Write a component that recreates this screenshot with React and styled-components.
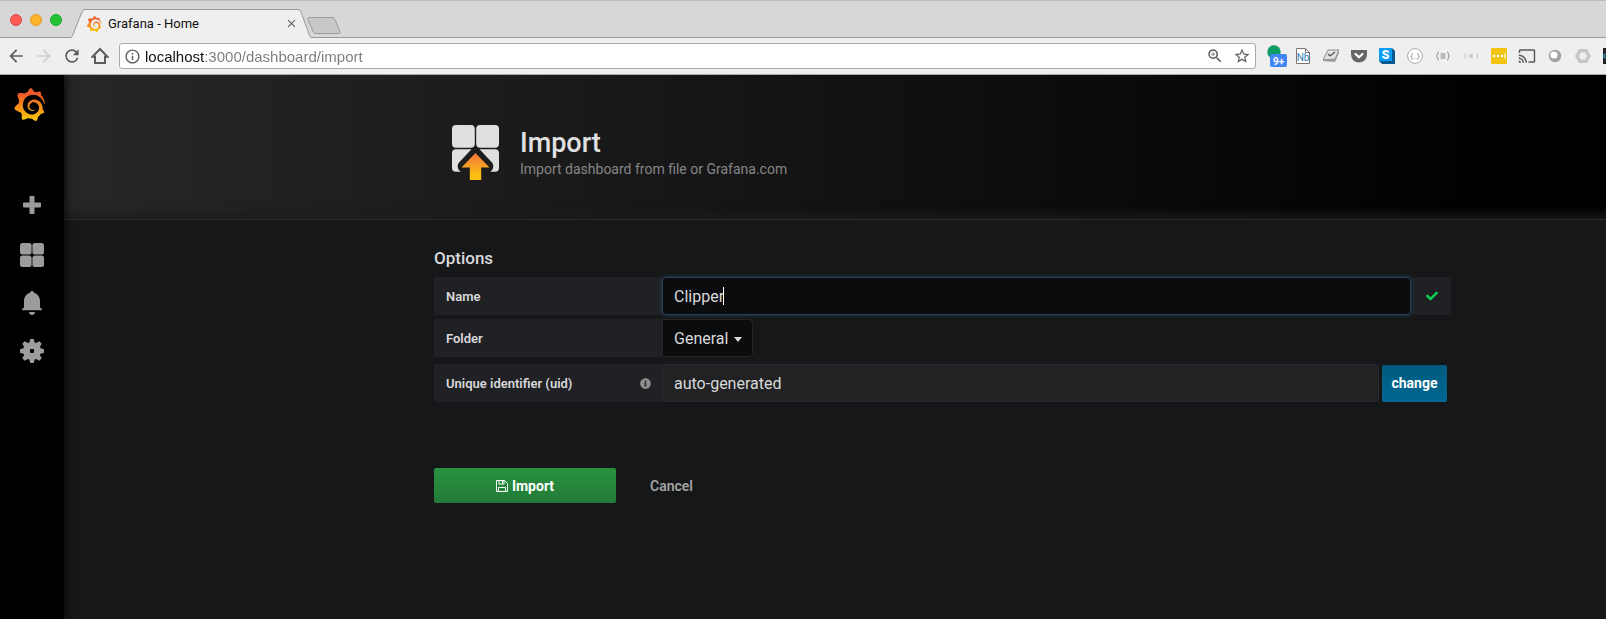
import React, { useState } from 'react';
import styled, { createGlobalStyle } from 'styled-components';
import { SiGrafana } from 'react-icons/si';
import { FaCheck, FaInfoCircle } from 'react-icons/fa';
import { MdArrowBack, MdArrowForward, MdRefresh, MdInfoOutline, MdZoomIn, MdStarBorder, MdCast, MdClose } from 'react-icons/md';

const Global = createGlobalStyle`
  * { box-sizing: border-box; }
  body { margin: 0; background: #161719; font-family: Roboto, "Liberation Sans", sans-serif; overflow: hidden; }
  button, input, select { font: inherit; margin: 0; border: 0; padding: 0; border-radius: 0; }
  button { cursor: pointer; }
  svg { display: block; flex: none; }
  h1, h2, p { margin: 0; }
`;

/* ---------- browser window ---------- */
const Window = styled.div`
  display: flex;
  flex-direction: column;
  min-height: 100vh;
`;
const TabStrip = styled.div`
  display: flex;
  align-items: flex-end;
  height: 38px;
  background: #d7d7d7;
  border-top: 1px solid #bdbdbd;
  box-shadow: inset 0 -1px #989898;
`;
const Lights = styled.div`
  display: flex;
  gap: 8px;
  padding: 0 8px 12px 10px;
`;
const Light = styled.button`
  width: 12px;
  height: 12px;
  border-radius: 50%;
  background: ${(p) => p.$color};
  border: 1px solid ${(p) => p.$edge};
`;
const Tab = styled.div`
  position: relative;
  display: flex;
  align-items: center;
  width: 242px;
  height: 29px;
  padding: 0 14px 0 16px;
`;
const TabShape = styled.svg`
  position: absolute;
  inset: 0;
  width: 100%;
  height: 100%;
`;
const TabTitle = styled.span`
  position: relative;
  flex: 1;
  margin-left: 6px;
  font-size: 13px;
  line-height: 16px;
  color: #111;
`;
const IconButton = styled.button`
  position: relative;
  display: flex;
  flex: none;
  align-items: center;
  justify-content: center;
  width: ${(p) => p.$w || 28}px;
  height: 24px;
  background: none;
  color: ${(p) => p.$color || '#5a5c60'};
`;
const NewTab = styled.button`
  background: none;
  padding-bottom: 4px;
  margin-left: -5px;
`;
const Toolbar = styled.div`
  display: flex;
  align-items: center;
  height: 37px;
  background: #efefef;
  border-bottom: 1px solid #a9a9a9;
  padding-left: 2px;
  overflow: hidden;
`;
const AddressBar = styled.div`
  display: flex;
  align-items: center;
  flex: 1;
  height: 26px;
  margin-left: 5px;
  padding: 0 0 0 4px;
  background: #fff;
  border: 1px solid #a9a9a9;
  border-radius: 3px;
  color: #5a5c60;
`;
const Url = styled.input`
  flex: 1;
  min-width: 0;
  height: 22px;
  margin-left: 4px;
  font-family: "Liberation Sans", Arial, sans-serif;
  font-size: 15px;
  color: transparent;
  background: linear-gradient(90deg, #111 60px, #7b7b7b 60px);
  background-clip: text;
  -webkit-background-clip: text;
  outline: 0;
`;
const Extensions = styled.div`
  display: flex;
  align-items: center;
  width: 350px;
  padding-left: 5px;
`;

/* ---------- Grafana ---------- */
const AppShell = styled.div`
  display: flex;
  flex: 1;
  overflow: hidden;
`;
const Sidebar = styled.nav`
  position: relative;
  z-index: 1;
  display: flex;
  flex-direction: column;
  align-items: center;
  width: 64px;
  background: #000;
  box-shadow: 0 0 10px #000;
`;
const SideLink = styled.a`
  display: flex;
  align-items: center;
  justify-content: center;
  width: 64px;
  height: 48px;
  margin-bottom: ${(p) => p.$after || 0}px;
  color: #9c9c9c;
`;
const LogoLink = styled(SideLink)`
  height: 58px;
  padding-right: 6px;
`;
const GrafanaMark = styled(SiGrafana)`
  position: relative;
  path { fill: url(#flame); }
`;
const Main = styled.main`
  flex: 1;
  min-width: 0;
  background: #161719;
`;
const PageHeader = styled.header`
  display: flex;
  align-items: flex-start;
  height: 145px;
  padding: 50px 155px 0 388px;
  background: linear-gradient(90deg, #272729, #000 94%);
  box-shadow: inset 0 -14px 12px -10px #1c1c1d;
  border-bottom: 1px solid #2b2b2d;
`;
const Titles = styled.div`
  margin-left: 21px;
`;
const Title = styled.h1`
  font-size: 27px;
  line-height: 36px;
  font-weight: 500;
  color: #e0e0e0;
`;
const Subtitle = styled.p`
  font-size: 14px;
  line-height: 16px;
  color: #868686;
`;
const Form = styled.form`
  padding: 27px 155px 0 370px;
`;
const Heading = styled.h2`
  font-size: 17px;
  line-height: 22px;
  font-weight: 500;
  color: #d8d9da;
  margin-bottom: 8px;
`;
const Row = styled.div`
  display: flex;
  align-items: center;
  height: 38px;
  margin-bottom: ${(p) => p.$after}px;
  padding-right: ${(p) => p.$inset || 0}px;
`;
const Label = styled.label`
  display: flex;
  align-items: center;
  justify-content: space-between;
  width: 228px;
  height: 38px;
  padding: 0 11px 0 12px;
  border-radius: 2px;
  background: #202124;
  color: #d8d9da;
  font-size: 13px;
  font-weight: 600;
`;
const Field = styled.div`
  position: relative;
  display: flex;
  flex: ${(p) => (p.$fit ? 'none' : 1)};
`;
const TextBox = styled.input`
  flex: 1;
  min-width: 0;
  height: 38px;
  padding: 0 11px;
  font-size: 16px;
  color: #d8d9da;
  caret-color: transparent;
  outline: 0;
  background: ${(p) => (p.readOnly ? '#222224' : '#0b0c0e')};
  border: 1px solid ${(p) => (p.readOnly ? '#28292c' : '#262628')};
  border-radius: 0 4px 4px 0;
  ${(p) => p.$active && 'border-color: #2a4058; border-radius: 4px; box-shadow: 0 0 4px #2b4662;'}
`;
const Caret = styled.span`
  position: absolute;
  left: 61px;
  top: 10px;
  width: 1px;
  height: 18px;
  background: #fff;
`;
const FolderSelect = styled.select`
  appearance: none;
  width: 91px;
  height: 38px;
  padding: 0 11px;
  font-size: 16px;
  color: #d8d9da;
  background: #0b0c0e;
  border: 1px solid #262628;
  border-radius: 0 4px 4px 0;
`;
const Chevron = styled.span`
  position: absolute;
  right: 11px;
  top: 18px;
  border: 4px solid transparent;
  border-top: 5px solid #d8d9da;
  border-bottom: 0;
  pointer-events: none;
`;
const Status = styled.span`
  display: flex;
  align-items: center;
  justify-content: center;
  width: 38px;
  height: 38px;
  margin-left: 2px;
  border-radius: 2px;
  background: #202124;
  color: #10d050;
`;
const Button = styled.button`
  display: flex;
  align-items: center;
  justify-content: center;
  gap: 4px;
  width: ${(p) => p.$w}px;
  height: ${(p) => p.$h}px;
  margin-left: ${(p) => p.$before || 0}px;
  border-radius: 2px;
  font-size: 14px;
  font-weight: 700;
  color: #fff;
  background: ${(p) => p.$fill};
`;
const Actions = styled.div`
  display: flex;
  align-items: center;
  margin-top: 66px;
`;
const Cancel = styled.a`
  margin-left: 34px;
  font-size: 14px;
  font-weight: 600;
  color: #a3a3a3;
  text-decoration: none;
`;

const HomeIcon = () => (
  <svg width="18" height="18" viewBox="0 0 18 18" fill="none" stroke="#5a5c60" strokeWidth="2">
    <path d="M1.500 9.800 9 2l7.500 7.800H14V16H4V9.800Z" />
  </svg>
);
const PlusIcon = () => (
  <svg width="18" height="18" viewBox="0 0 18 18" fill="currentColor">
    <path d="M7.500 0h3a1 1 0 0 1 1 1v5.500H17a1 1 0 0 1 1 1v3a1 1 0 0 1-1 1h-5.500V17a1 1 0 0 1-1 1h-3a1 1 0 0 1-1-1v-5.500H1a1 1 0 0 1-1-1v-3a1 1 0 0 1 1-1h5.500V1a1 1 0 0 1 1-1Z" />
  </svg>
);
const DashboardIcon = () => (
  <svg width="24" height="24" viewBox="0 0 24 24" fill="currentColor">
    <rect width="11.600" height="11.600" rx="2.500" />
    <rect x="12.400" width="11.600" height="11.600" rx="2.500" />
    <rect y="12.400" width="11.600" height="11.600" rx="2.500" />
    <rect x="12.400" y="12.400" width="11.600" height="11.600" rx="2.500" />
    <circle cx="12" cy="12" r="1.500" fill="#000" />
  </svg>
);
const BellIcon = () => (
  <svg width="20" height="24" viewBox="0 0 20 24" fill="currentColor">
    <path d="M10 0c1 0 1.800.7 1.900 1.700C15.500 2.600 18 6 18 10v6c0 .7.300 1 1 1.300.7.300 1 .6 1 1.200 0 .4-.3.700-.8.700H.8c-.5 0-.8-.3-.8-.7 0-.6.300-.9 1-1.200.7-.3 1-.6 1-1.300v-6c0-4 2.500-7.400 6.100-8.300C8.200.7 9 0 10 0Z" />
    <path d="M7 21h6c-.3 1.800-1.500 3-3 3s-2.700-1.200-3-3Z" />
  </svg>
);
const GearIcon = () => (
  <svg width="24" height="24" viewBox="-12 -12 24 24" fill="currentColor">
    {[0, 45, 90, 135, 180, 225, 270, 315].map((a) => (
      <path key={a} d="M-3.200-7-1.700-12H1.700L3.200-7Z" transform={`rotate(${a})`} />
    ))}
    <circle r="8.900" />
    <circle r="2.200" fill="#000" />
  </svg>
);
const ImportIcon = () => (
  <svg width="47" height="55" viewBox="0 0 47 55">
    <g fill="#e0e0e0">
      <rect width="22.800" height="22.800" rx="4" />
      <rect x="24.200" width="22.800" height="22.800" rx="4" />
      <path d="M4 24.200h15.500L7 37.500c-2 2.300-1.500 5.500-.2 7.500l2 1.800H4a4 4 0 0 1-4-4V28.200a4 4 0 0 1 4-4Z" />
      <path d="M43 24.200H27.500L40 37.500c2 2.300 1.500 5.500.2 7.500l-2 1.800H43a4 4 0 0 0 4-4V28.200a4 4 0 0 0-4-4Z" />
    </g>
    <path d="M23.500 28 37.500 42.500H29.200V55H17.800V42.500H9.500Z" fill="url(#arrow)" />
  </svg>
);
const SaveIcon = () => (
  <svg width="12" height="12" viewBox="0 0 12 12" fill="none" stroke="#fff">
    <path d="M.5.5h8l3 3v8H.5ZM3 .5V4h5V.5M2.500 11.500V7.500h7v4" />
    <path d="M6.500 1v2.500" />
  </svg>
);

const extensionIcons = [
  ['Messages', <svg width="23" height="22" viewBox="-3 0 23 22"><circle cx="7" cy="7" r="6.700" fill="#0b9d63" /><rect x="3" y="9" width="17" height="13" rx="2" fill="#4285f4" /><text x="11.500" y="19.500" fontSize="10" fontWeight="700" textAnchor="middle" fill="#fff">9+</text></svg>],
  ['Notebook', <svg width="16" height="16" viewBox="0 0 16 16"><path d="M1.500.5h9l4 4v11h-13Z" fill="#fff" stroke="#777" /><path d="M10.500.5v4h4" fill="none" stroke="#777" /><text x="8" y="13" fontSize="10" textAnchor="middle" fill="#2f7cb5">Nb</text></svg>],
  ['Mail check', <svg width="16" height="14" viewBox="0 0 16 14"><path d="M5 1h11l-4 9-12 1Z" fill="#e2e2e2" stroke="#777" strokeWidth=".8" /><path d="m0 11 12-1 4-9v3l-4 9-12-1Z" fill="#999" /><path d="m5 5 2 2 5-4" fill="none" stroke="#555" strokeWidth="1.300" /></svg>],
  ['Pocket', <svg width="16" height="14" viewBox="0 0 16 14"><path d="M0 1h16v4.500a8 8 0 0 1-16 0Z" fill="#666" /><path d="m4.500 5 3.500 3.300L11.500 5" fill="none" stroke="#fff" strokeWidth="2.200" strokeLinecap="round" /></svg>],
  ['Session', <svg width="16" height="16" viewBox="0 0 16 16"><path d="M0 0h13l3 3v13H3l-3-3Z" fill="#085a94" /><path d="M0 0h13v13H0Z" fill="#0d9cf4" /><text x="6.500" y="11" fontSize="12" fontWeight="900" textAnchor="middle" fill="#fff">S</text></svg>],
  ['JSON viewer', <svg width="16" height="16" viewBox="0 0 16 16"><circle cx="8" cy="8" r="7.400" fill="#fff" stroke="#aaa" /><text x="8" y="10.500" fontSize="8" textAnchor="middle" fill="#888">{'{..}'}</text></svg>],
  ['JSON formatter', <svg width="16" height="16" viewBox="0 0 16 16" fill="none" stroke="#888"><path d="M4 4c-2 0-1 3.500-2.500 4C3 8.500 2 12 4 12M12 4c2 0 1 3.500 2.500 4-1.500.5-.5 4-2.500 4M5.500 6h5M5.500 8h5M5.500 10h5" /></svg>],
  ['Regex', <svg width="16" height="16" viewBox="0 0 16 16" fill="none" stroke="#c4c4c4"><path d="M2 5v2M2 9v2M1 8h2M8 5.500v5M5.800 6.800l4.400 2.500M10.200 6.800 5.800 9.300M14.500 5v6" /></svg>],
  ['Passwords', <svg width="16" height="16" viewBox="0 0 16 16" fill="#fff"><rect width="16" height="16" rx="1" fill="#f1c40f" /><circle cx="3" cy="8" r="1.300" /><circle cx="7" cy="8" r="1.300" /><circle cx="11" cy="8" r="1.300" /><path d="M13.500 5h1v6h-1Z" /></svg>],
  ['Cast', <MdCast size={18} color="#5a5c60" />],
  ['Orb', <svg width="14" height="14" viewBox="0 0 14 14"><circle cx="7" cy="7" r="6.200" fill="#a2a2a2" /><circle cx="6" cy="6" r="3.600" fill="#fff" /></svg>],
  ['Hexagon', <svg width="16" height="16" viewBox="0 0 16 16"><path d="M4 1h8l4 7-4 7H4L0 8Z" fill="#c6c6c6" /><circle cx="8" cy="8" r="3.800" fill="#eee" stroke="#ddd" /></svg>],
  ['Terminal', <svg width="16" height="16" viewBox="0 0 16 16"><rect width="16" height="16" fill="#222" /><circle cx="3" cy="8" r="2" fill="none" stroke="#3ab5d8" strokeWidth="1.200" /></svg>],
];

const Defs = styled.svg`
  position: absolute;
`;
const Gradients = () => (
  <Defs width="0" height="0" aria-hidden="true">
    <defs>
      <linearGradient id="flame" x1="0" y1="0" x2="0" y2="1">
        <stop offset=".2" stopColor="#f05a28" />
        <stop offset="1" stopColor="#fbca0a" />
      </linearGradient>
      <linearGradient id="arrow" x1="0" y1="0" x2="0" y2="1">
        <stop offset="0" stopColor="#f0703c" />
        <stop offset=".8" stopColor="#fdbf12" />
      </linearGradient>
    </defs>
  </Defs>
);

export default function App() {
  const [name, setName] = useState('Clipper');
  const [url, setUrl] = useState('localhost:3000/dashboard/import');
  return (
    <Window>
      <Global />
      <Gradients />
      <TabStrip>
        <Lights>
          <Light aria-label="Close window" $color="#fc5b57" $edge="#e2463f" />
          <Light aria-label="Minimize" $color="#fdb32a" $edge="#e09e21" />
          <Light aria-label="Zoom window" $color="#24c138" $edge="#1aab29" />
        </Lights>
        <Tab>
          <TabShape viewBox="0 0 242 29" preserveAspectRatio="none">
            <path d="M0 28.500c1.500 0 2-1 2.500-2L12 3c.7-1.700 1.500-2.500 3-2.500h213c1.500 0 2.300.8 3 2.500l8.500 23.500c.5 1 1 2 2.500 2V29H0Z" fill="#efefef" />
            <path d="M0 28.500c1.500 0 2-1 2.500-2L12 3c.7-1.700 1.500-2.500 3-2.500h213c1.500 0 2.300.8 3 2.500l8.500 23.500c.5 1 1 2 2.500 2" fill="none" stroke="#989898" />
          </TabShape>
          <GrafanaMark size={16} />
          <TabTitle>Grafana - Home</TabTitle>
          <IconButton $w={14} aria-label="Close tab"><MdClose size={13} /></IconButton>
        </Tab>
        <NewTab aria-label="New tab">
          <svg width="34" height="17" viewBox="0 0 34 17">
            <path d="M3 .5h22c1.500 0 2.300.5 3 2l5 12c.5 1.300 0 2-1.500 2H9c-1.500 0-2.300-.5-3-2l-5-12c-.5-1.300 0-2 2-2Z" fill="#c8c8c8" stroke="#9c9c9c" />
          </svg>
        </NewTab>
      </TabStrip>
      <Toolbar>
        <IconButton aria-label="Back"><MdArrowBack size={20} /></IconButton>
        <IconButton aria-label="Forward" $color="#cfcfcf"><MdArrowForward size={20} /></IconButton>
        <IconButton aria-label="Reload"><MdRefresh size={20} /></IconButton>
        <IconButton aria-label="Home"><HomeIcon /></IconButton>
        <AddressBar>
          <MdInfoOutline size={17} />
          <Url aria-label="Address" value={url} onChange={(e) => setUrl(e.target.value)} spellCheck={false} />
          <IconButton $w={27} aria-label="Zoom"><MdZoomIn size={18} /></IconButton>
          <IconButton $w={27} aria-label="Bookmark"><MdStarBorder size={18} /></IconButton>
        </AddressBar>
        <Extensions>
          {extensionIcons.map(([label, icon]) => (
            <IconButton key={label} aria-label={label}>{icon}</IconButton>
          ))}
        </Extensions>
      </Toolbar>
      <AppShell>
        <Sidebar>
          <LogoLink href="#" aria-label="Grafana home" $after={48}><GrafanaMark size={33} /></LogoLink>
          <SideLink href="#" aria-label="Create" $after={2}><PlusIcon /></SideLink>
          <SideLink href="#" aria-label="Dashboards"><DashboardIcon /></SideLink>
          <SideLink href="#" aria-label="Alerting"><BellIcon /></SideLink>
          <SideLink href="#" aria-label="Configuration"><GearIcon /></SideLink>
        </Sidebar>
        <Main>
          <PageHeader>
            <ImportIcon />
            <Titles>
              <Title>Import</Title>
              <Subtitle>Import dashboard from file or Grafana.com</Subtitle>
            </Titles>
          </PageHeader>
          <Form onSubmit={(e) => e.preventDefault()}>
            <Heading>Options</Heading>
            <Row $after={4}>
              <Label htmlFor="name">Name</Label>
              <Field>
                <TextBox id="name" $active value={name} onChange={(e) => setName(e.target.value)} />
                <Caret />
              </Field>
              <Status><FaCheck size={12} /></Status>
            </Row>
            <Row $after={7}>
              <Label htmlFor="folder">Folder</Label>
              <Field $fit>
                <FolderSelect id="folder"><option>General</option></FolderSelect>
                <Chevron />
              </Field>
            </Row>
            <Row $inset={4}>
              <Label htmlFor="uid">Unique identifier (uid)<FaInfoCircle size={11} color="#8e8e8e" /></Label>
              <Field><TextBox id="uid" readOnly value="auto-generated" /></Field>
              <Button type="button" $w={65} $h={37} $before={3} $fill="linear-gradient(#005a7d, #006893)">change</Button>
            </Row>
            <Actions>
              <Button type="submit" $w={182} $h={35} $fill="linear-gradient(#28923f, #227b37)"><SaveIcon />Import</Button>
              <Cancel href="#">Cancel</Cancel>
            </Actions>
          </Form>
        </Main>
      </AppShell>
    </Window>
  );
}
